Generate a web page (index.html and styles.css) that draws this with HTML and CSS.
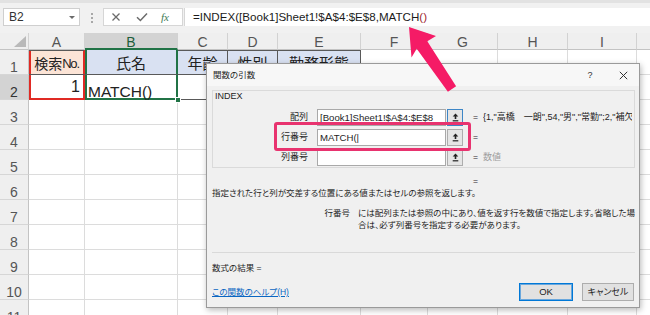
FILE: index.html
```html
<!DOCTYPE html>
<html lang="ja">
<head>
<meta charset="utf-8">
<title>関数の引数</title>
<link rel="stylesheet" href="styles.css">
</head>
<body>
<div class="app">
  <div class="fbar">
    <div class="namebox"><span class="nm">B2</span><span class="dd"></span></div>
    <div class="grip"><i></i><i></i><i></i></div>
    <div class="fxbox">
      <svg class="ic-x" width="10" height="10" viewBox="0 0 10 10"><path d="M1.5 1.5L8.5 8.5M8.5 1.5L1.5 8.5" stroke="#6b6b6b" stroke-width="1.3" fill="none"/></svg>
      <svg class="ic-ok" width="12" height="10" viewBox="0 0 12 10"><path d="M1 5.2L4.4 8.5L11 1.5" stroke="#6b6b6b" stroke-width="1.5" fill="none"/></svg>
      <span class="fx">fx</span>
    </div>
    <div class="formula">=INDEX([Book1]Sheet1!$A$4:$E$8,MATCH<span class="paren">()</span></div>
  </div>

  <div class="sheet">
    <div class="ch corner"><svg width="12" height="11" viewBox="0 0 12 11"><polygon points="12,0 12,11 0,11" fill="#b9b9b9"/></svg></div>
    <div class="ch">A</div>
    <div class="ch sel">B</div>
    <div class="ch">C</div>
    <div class="ch">D</div>
    <div class="ch">E</div>
    <div class="ch">F</div>
    <div class="ch">G</div>
    <div class="ch">H</div>
    <div class="ch">I</div>
    <div class="ch"></div>

    <div class="rh">1</div>
    <div class="c th a1">検索<span class="no">No.</span></div>
    <div class="c th b1">氏名</div>
    <div class="c th">年齢</div>
    <div class="c th">性別</div>
    <div class="c th">勤務形態</div>
    <div class="c"></div><div class="c"></div><div class="c"></div><div class="c"></div><div class="c"></div>

    <div class="rh sel">2</div>
    <div class="c td a2">1</div>
    <div class="c td b2">MATCH()<span class="handle"></span></div>
    <div class="c td"></div>
    <div class="c td"></div>
    <div class="c td"></div>
    <div class="c"></div><div class="c"></div><div class="c"></div><div class="c"></div><div class="c"></div>

    <div class="rh">3</div>
    <div class="c"></div><div class="c"></div><div class="c"></div><div class="c"></div><div class="c"></div><div class="c"></div><div class="c"></div><div class="c"></div><div class="c"></div><div class="c"></div>
    <div class="rh">4</div>
    <div class="c"></div><div class="c"></div><div class="c"></div><div class="c"></div><div class="c"></div><div class="c"></div><div class="c"></div><div class="c"></div><div class="c"></div><div class="c"></div>
    <div class="rh">5</div>
    <div class="c"></div><div class="c"></div><div class="c"></div><div class="c"></div><div class="c"></div><div class="c"></div><div class="c"></div><div class="c"></div><div class="c"></div><div class="c"></div>
    <div class="rh">6</div>
    <div class="c"></div><div class="c"></div><div class="c"></div><div class="c"></div><div class="c"></div><div class="c"></div><div class="c"></div><div class="c"></div><div class="c"></div><div class="c"></div>
    <div class="rh">7</div>
    <div class="c"></div><div class="c"></div><div class="c"></div><div class="c"></div><div class="c"></div><div class="c"></div><div class="c"></div><div class="c"></div><div class="c"></div><div class="c"></div>
    <div class="rh">8</div>
    <div class="c"></div><div class="c"></div><div class="c"></div><div class="c"></div><div class="c"></div><div class="c"></div><div class="c"></div><div class="c"></div><div class="c"></div><div class="c"></div>
    <div class="rh">9</div>
    <div class="c"></div><div class="c"></div><div class="c"></div><div class="c"></div><div class="c"></div><div class="c"></div><div class="c"></div><div class="c"></div><div class="c"></div><div class="c"></div>
    <div class="rh">10</div>
    <div class="c"></div><div class="c"></div><div class="c"></div><div class="c"></div><div class="c"></div><div class="c"></div><div class="c"></div><div class="c"></div><div class="c"></div><div class="c"></div>
    <div class="rh">11</div>
    <div class="c"></div><div class="c"></div><div class="c"></div><div class="c"></div><div class="c"></div><div class="c"></div><div class="c"></div><div class="c"></div><div class="c"></div><div class="c"></div>
  </div>

  <div class="dlg">
    <div class="dlg-title">
      <span class="t">関数の引数</span>
      <span class="tb help">?</span>
      <span class="tb close"><svg width="9" height="9" viewBox="0 0 9 9"><path d="M0.8 0.8L8.2 8.2M8.2 0.8L0.8 8.2" stroke="#333" stroke-width="1" fill="none"/></svg></span>
    </div>
    <div class="dlg-body">
      <div class="grp">
        <div class="grp-label">INDEX</div>
        <div class="arg">
          <span class="arg-name">配列</span>
          <span class="arg-input">[Book1]Sheet1!$A$4:$E$8</span>
          <span class="ref focus"><svg width="7" height="9" viewBox="0 0 7 9"><path d="M3.5 0.4L0.7 3.6H2.7V6.1H4.3V3.6H6.3Z" fill="#222"/><rect x="0.7" y="7.2" width="5.6" height="1.2" fill="#222"/></svg></span>
          <span class="eq">=</span>
          <span class="val">{1,"高橋　一朗",54,"男","常勤";2,"補欠</span>
        </div>
        <div class="arg">
          <span class="arg-name">行番号</span>
          <span class="arg-input">MATCH(|</span>
          <span class="ref"><svg width="7" height="9" viewBox="0 0 7 9"><path d="M3.5 0.4L0.7 3.6H2.7V6.1H4.3V3.6H6.3Z" fill="#222"/><rect x="0.7" y="7.2" width="5.6" height="1.2" fill="#222"/></svg></span>
          <span class="eq">=</span>
          <span class="val"></span>
        </div>
        <div class="arg">
          <span class="arg-name">列番号</span>
          <span class="arg-input"></span>
          <span class="ref"><svg width="7" height="9" viewBox="0 0 7 9"><path d="M3.5 0.4L0.7 3.6H2.7V6.1H4.3V3.6H6.3Z" fill="#222"/><rect x="0.7" y="7.2" width="5.6" height="1.2" fill="#222"/></svg></span>
          <span class="eq">=</span>
          <span class="val hint">数値</span>
        </div>
      </div>
      <div class="res-eq">=</div>
      <div class="desc">指定された行と列が交差する位置にある値またはセルの参照を返します。</div>
      <div class="param">
        <span class="param-name">行番号</span>
        <span class="param-text">には配列または参照の中にあり、値を返す行を数値で指定します。省略した場<br>合は、必ず列番号を指定する必要があります。</span>
      </div>
      <div class="sep"></div>
      <div class="result">数式の結果 =</div>
      <div class="foot">
        <span class="help-link">この関数のヘルプ(H)</span>
        <span class="btn ok">OK</span>
        <span class="btn cancel">キャンセル</span>
      </div>
    </div>
  </div>

  <div class="mark"></div>
  <svg class="arrow" width="650" height="315" viewBox="0 0 650 315">
    <polygon points="409,27 436,36 427.3,41.2 456.1,86.2 447.9,91.8 416.7,48.8 411.5,57.5" fill="#f51b66"/>
  </svg>
</div>
</body>
</html>
```

FILE: styles.css
```css
* { box-sizing: border-box; margin: 0; padding: 0; }
html, body { width: 650px; height: 315px; overflow: hidden; background: #fff; }
body { font-family: "Liberation Sans", "Noto Sans CJK JP", sans-serif; color: #222; }
.app { position: relative; width: 650px; height: 315px; overflow: hidden; }

/* formula bar */
.fbar { height: 33px; background: #f1f1f1; border-top: 3px solid #e2e2e2; display: flex; align-items: flex-start; padding: 5px 0 0 3px; }
.namebox { width: 77px; height: 18px; background: #fff; border: 1px solid #cfcfcf; display: flex; align-items: center; padding: 0 4px 0 5px; font-size: 12px; color: #333; }
.namebox .nm { flex: 1; }
.dd { width: 0; height: 0; border-left: 3px solid transparent; border-right: 3px solid transparent; border-top: 3px solid #6a6a6a; }
.grip { width: 5px; margin-left: 9px; margin-top: 5px; display: flex; flex-direction: column; align-items: center; gap: 2px; }
.grip i { display: block; width: 2px; height: 2px; background: #a8a8a8; }
.fxbox { margin-left: 9px; width: 80px; height: 18px; background: #fff; border: 1px solid #d6d6d6; display: flex; align-items: center; padding-left: 7px; }
.fxbox .ic-ok { margin-left: 15px; }
.fxbox .fx { margin-left: 13px; font: italic 11px "Liberation Serif", serif; color: #3e7a55; }
.formula { margin-left: 1px; flex: 1; height: 18px; background: #fff; border-left: 1px solid #d6d6d6; padding-left: 8px; font-size: 11.6px; line-height: 17px; color: #1b1b1b; white-space: nowrap; }
.paren { color: #a0282c; }

/* sheet */
.sheet { display: grid; grid-template-columns: 29px 56px 93px 50px 50px 83px 67px 70px 70px 69px 40px; grid-template-rows: 17px repeat(11, 25px); }
.ch { background: #efefef; border-right: 1px solid #d2d2d2; border-bottom: 1px solid #c3c3c3; display: flex; justify-content: center; align-items: center; padding-top: 2px; font-size: 14px; line-height: 14px; color: #555; }
.ch.sel { background: #d3d3d3; color: #1e5e3a; border-bottom: 2px solid #217346; }
.ch.corner { justify-content: flex-end; align-items: flex-end; padding: 0 2px 2px 0; }
.rh { background: #efefef; border-right: 1px solid #c3c3c3; border-bottom: 1px solid #d6d6d6; display: flex; justify-content: center; align-items: flex-end; font-size: 14px; line-height: 13px; color: #555; }
.rh.sel { background: #d3d3d3; color: #333; }
.c { border-right: 1px solid #dcdcdc; border-bottom: 1px solid #dcdcdc; display: flex; min-width: 0; overflow: hidden; white-space: nowrap; }

.th { background: #d9e1f2; justify-content: center; align-items: center; padding-top: 3px; font-size: 15px; line-height: 18px; color: #222; border-right-color: #595959; border-bottom-color: #595959; box-shadow: inset 0 1px #595959; }
.td { border-right-color: #595959; border-bottom-color: #595959; }
.a1 { background: #fce4d6; font-size: 14px; border-right-color: #e02a24; box-shadow: inset 0 1px #595959, inset 2px 0 #e02a24, inset -1px 0 #e02a24; }
.a1 .no { font-size: 13px; letter-spacing: -1.2px; }
.b1 { border-right-color: #217346; box-shadow: inset 2px 0 #217346, inset -1px 0 #217346; }
.a2 { justify-content: flex-end; align-items: center; padding-right: 4px; font-size: 16px; line-height: 18px; color: #222; border-right-color: #e02a24; border-bottom-color: #e02a24; box-shadow: inset 2px 0 #e02a24, inset -1px 0 #e02a24, inset 0 -1px #e02a24; }
.b2 { position: relative; overflow: visible; align-items: flex-end; padding-left: 3px; font-size: 15.5px; line-height: 15px; color: #222; border-right-color: #217346; border-bottom-color: #217346; box-shadow: inset 2px 0 #217346, inset -1px 0 #217346, inset 0 -1px #217346; }
.handle { position: absolute; right: -4px; bottom: -4px; width: 6px; height: 6px; background: #217346; border: 1px solid #fff; z-index: 2; }

/* dialog */
.dlg { position: absolute; left: 206px; top: 63px; width: 434px; height: 245px; background: #f0f0f0; border: 1px solid #9a9a9a; box-shadow: 1px 2px 6px rgba(0, 0, 0, 0.28); font-size: 8.5px; line-height: 12px; color: #1e1e1e; font-feature-settings: "palt"; display: flex; flex-direction: column; }
.dlg-title { height: 22px; background: #f7f7f7; display: flex; align-items: center; padding: 0 10px 0 6px; }
.dlg-title .t { flex: 1; }
.tb { width: 12px; text-align: center; }
.tb.help { font-size: 9px; color: #333; }
.tb.close { margin-left: 21px; display: flex; justify-content: center; }
.dlg-body { padding: 4px 4px 0 5px; display: flex; flex-direction: column; }
.grp { height: 78px; border: 1px solid #dadada; padding: 0 2px; }
.grp-label { font-size: 9px; line-height: 10px; margin-bottom: 6px; }
.arg { display: flex; align-items: center; height: 20px; }
.arg-name { width: 93px; text-align: right; font-size: 9px; }
.arg-input { margin-left: 9px; width: 129px; height: 17px; background: #fff; border: 1px solid #a9a9a9; font-size: 9.6px; line-height: 15px; padding-left: 2px; white-space: nowrap; overflow: hidden; }
.ref { margin-left: 1px; width: 16px; height: 17px; background: #e5e5e5; border: 1px solid #adadad; display: flex; align-items: center; justify-content: center; }
.ref.focus { border-color: #3d86c6; }
.eq { margin-left: 10px; width: 6px; }
.val { margin-left: 4px; flex: 1; min-width: 0; overflow: hidden; white-space: nowrap; font-size: 9px; }
.val.hint { color: #9c9c9c; }
.res-eq { margin-top: 7px; padding-left: 261px; }
.desc { white-space: nowrap; }
.param { margin-top: 8px; display: flex; white-space: nowrap; }
.param-name { width: 145px; text-align: right; }
.param-text { margin-left: 8px; }
.sep { margin-top: 21px; height: 1px; background: #d9d9d9; }
.result { margin-top: 9px; }
.foot { margin-top: 9px; height: 18px; display: flex; align-items: center; }
.help-link { flex: 1; color: #0a66c2; text-decoration: underline; }
.btn { height: 18px; background: #e1e1e1; border: 1px solid #adadad; display: flex; align-items: center; justify-content: center; font-size: 9.5px; color: #1e1e1e; }
.btn.ok { width: 54px; border-color: #0078d7; box-shadow: inset 0 0 0 1px #6aa7dc; }
.btn.cancel { width: 52px; margin-left: 9px; margin-right: 1px; font-size: 9px; }

/* annotations */
.mark { position: absolute; left: 274px; top: 122px; width: 197px; height: 29px; border: 3px solid #e8336f; border-radius: 3px; }
.arrow { position: absolute; left: 0; top: 0; pointer-events: none; }
```
